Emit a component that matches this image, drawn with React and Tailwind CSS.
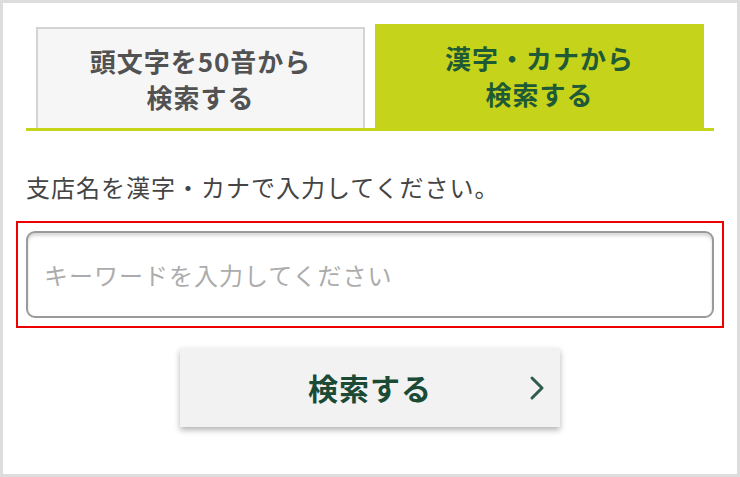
import React from "react";

const ChevronRight = () => (
  <svg width="16" height="26" viewBox="0 0 16 26" fill="none">
    <path d="M3 3 L13 13 L3 23" stroke="#2d5b4c" strokeWidth="3" strokeLinecap="round" strokeLinejoin="round" />
  </svg>
);

const App = () => {
  return (
    <div
      className="w-[740px] h-[477px] border-[3px] border-[#dddddd] bg-white overflow-hidden"
      style={{ fontFamily: '"Noto Sans CJK JP", "Noto Sans", sans-serif' }}
    >
      <div className="pl-[23px] pt-[21px] w-[711px]">
        {/* tabs */}
        <div className="flex items-end gap-[10px] px-[10px] border-b-[3px] border-[#c5d31a]">
          <button className="w-[329px] h-[101px] flex items-center justify-center bg-[#f7f6f7] border-[2px] border-b-0 border-[#d4d4d4] text-[#525252] text-[26px] font-bold leading-[36px] tracking-[1px] text-center">
            頭文字を50音から
            <br />
            検索する
          </button>
          <button className="w-[329px] h-[104px] flex items-center justify-center bg-[#c5d31a] text-[#1f5a36] text-[26px] font-bold leading-[36px] tracking-[1px] text-center">
            漢字・カナから
            <br />
            検索する
          </button>
        </div>

        <p className="mt-[38px] text-[24px] leading-[36px] tracking-[1px] text-[#444444]">
          支店名を漢字・カナで入力してください。
        </p>

        {/* keyword */}
        <div className="mt-[16px] -mx-[10px] border-[2px] border-[#ee0000] p-[8px]">
          <input
            type="text"
            placeholder="キーワードを入力してください"
            className="w-full h-[87px] rounded-[9px] border-[2px] border-[#9a9a9a] bg-white pl-[16px] text-[24px] tracking-[1px] text-[#333] placeholder:text-[#acacac] shadow-[inset_0_3px_3px_rgba(0,0,0,0.15)] outline-none"
          />
        </div>

        <button className="relative mt-[20px] mx-auto flex items-center justify-center w-[380px] h-[79px] bg-[#f2f2f2] shadow-[0_3px_6px_rgba(0,0,0,0.3)] text-[#1b4a35] text-[30px] font-bold tracking-[1px]">
          検索する
          <span className="absolute right-[15px] top-[27px]">
            <ChevronRight />
          </span>
        </button>
      </div>
    </div>
  );
};

export default App;
